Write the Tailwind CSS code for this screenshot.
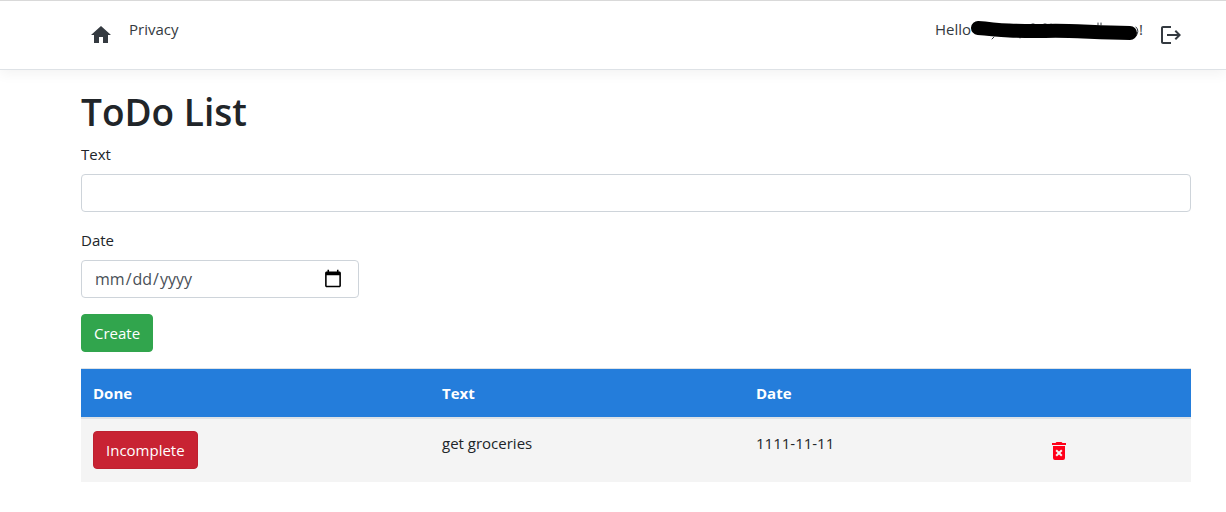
<!DOCTYPE html>
<html lang="en">
<head>
<meta charset="utf-8">
<title>ToDo List</title>
<script src="https://cdn.jsdelivr.net/npm/@tailwindcss/browser@4"></script>
</head>
<body class="bg-white font-['Segoe_UI','Open_Sans',sans-serif] text-[15px] leading-6 text-[#212529]">
<header class="flex items-start justify-between border-y border-t-[#d9d9d9] border-b-[#dee2e6] pt-4 pr-[35px] pb-[22px] pl-[81px] shadow-[0_4px_12px_rgba(0,0,0,0.05)]">
  <nav class="flex items-start text-[#343a40]">
    <a href="#" aria-label="Home" class="px-2 pt-[6px]"><svg class="size-6" viewBox="0 0 24 24" fill="currentColor"><path d="M10 20v-6h4v6h5v-8h3L12 3 2 12h3v8z"/></svg></a>
    <a href="#" class="px-2">Privacy</a>
  </nav>
  <div class="flex items-start text-[#343a40]">
    <a href="#" class="flex px-2"><span>Hello</span><svg class="h-6 w-[168px]" viewBox="0 0 168 24" fill="none" stroke-linecap="round" stroke-linejoin="round"><path d="M23 20l-2 2M49 20v1M61 7h2M73 7h2M80 7v2M127 6v2M130 6v2M165 10q4 4 0 9" stroke="#343a40"/><path d="M7 11C22 12 26 13.500 38 13.500C60 14.500 80 13.500 98 14C118 14.500 130 16 159 16" stroke="#000" stroke-width="14"/></svg><span>!</span></a>
    <button type="button" aria-label="Log out" class="px-2 pt-[6px]"><svg class="size-6" viewBox="0 0 24 24" fill="currentColor"><path d="M17 7l-1.41 1.41L18.17 11H8v2h10.17l-2.58 2.58L17 17l5-5zM4 5h8V3H4c-1.1 0-2 .9-2 2v14c0 1.1.9 2 2 2h8v-2H4z"/></svg></button>
  </div>
</header>
<main class="pt-5 pr-[35px] pl-[81px]">
  <h1 class="mb-2 text-[37px] leading-11 font-semibold">ToDo List</h1>
  <form>
    <label for="text" class="mb-2 block">Text</label>
    <input id="text" type="text" class="mb-4 block h-[38px] w-full rounded border border-[#ced4da] px-3">
    <label for="date" class="mb-2 block">Date</label>
    <input id="date" type="date" class="mb-4 block h-[38px] w-1/4 rounded border border-[#ced4da] px-3 text-base text-[#495057] [&::-webkit-calendar-picker-indicator]:mr-[3px] [&::-webkit-calendar-picker-indicator]:size-5 [&::-webkit-calendar-picker-indicator]:p-0">
    <button type="button" class="mb-4 block h-[38px] rounded border border-[#31a54d] bg-[#31a54d] px-3 text-white">Create</button>
  </form>
  <table class="w-full table-fixed border-collapse text-left">
    <thead>
      <tr class="border-t border-b-2 border-t-[#dee2e6] border-b-[#dee2e6] bg-[#247ddb] text-white">
        <th class="w-[349px] p-3 font-bold">Done</th>
        <th class="w-[314px] p-3 font-bold">Text</th>
        <th class="w-[291px] p-3 font-bold">Date</th>
        <th class="p-3"></th>
      </tr>
    </thead>
    <tbody>
      <tr class="h-16 bg-[#f4f4f4] align-top">
        <td class="p-3"><button type="button" class="block h-[38px] rounded border border-[#bd2130] bg-[#c82333] px-3 text-white">Incomplete</button></td>
        <td class="p-3">get groceries</td>
        <td class="p-3">1111-11-11</td>
        <td class="p-3"><button type="button" aria-label="Delete" class="block pt-2 text-[#ff0019]"><svg class="size-6" viewBox="0 0 24 24" fill="currentColor"><path d="M6 19a2 2 0 0 0 2 2h8a2 2 0 0 0 2-2V7H6v12m2.46-7.12 1.41-1.41L12 12.59l2.12-2.12 1.41 1.41L13.41 14l2.12 2.12-1.41 1.41L12 15.41l-2.12 2.12-1.41-1.41L10.59 14l-2.13-2.12M15.5 4l-1-1h-5l-1 1H5v2h14V4z"/></svg></button></td>
      </tr>
    </tbody>
  </table>
</main>
</body>
</html>
